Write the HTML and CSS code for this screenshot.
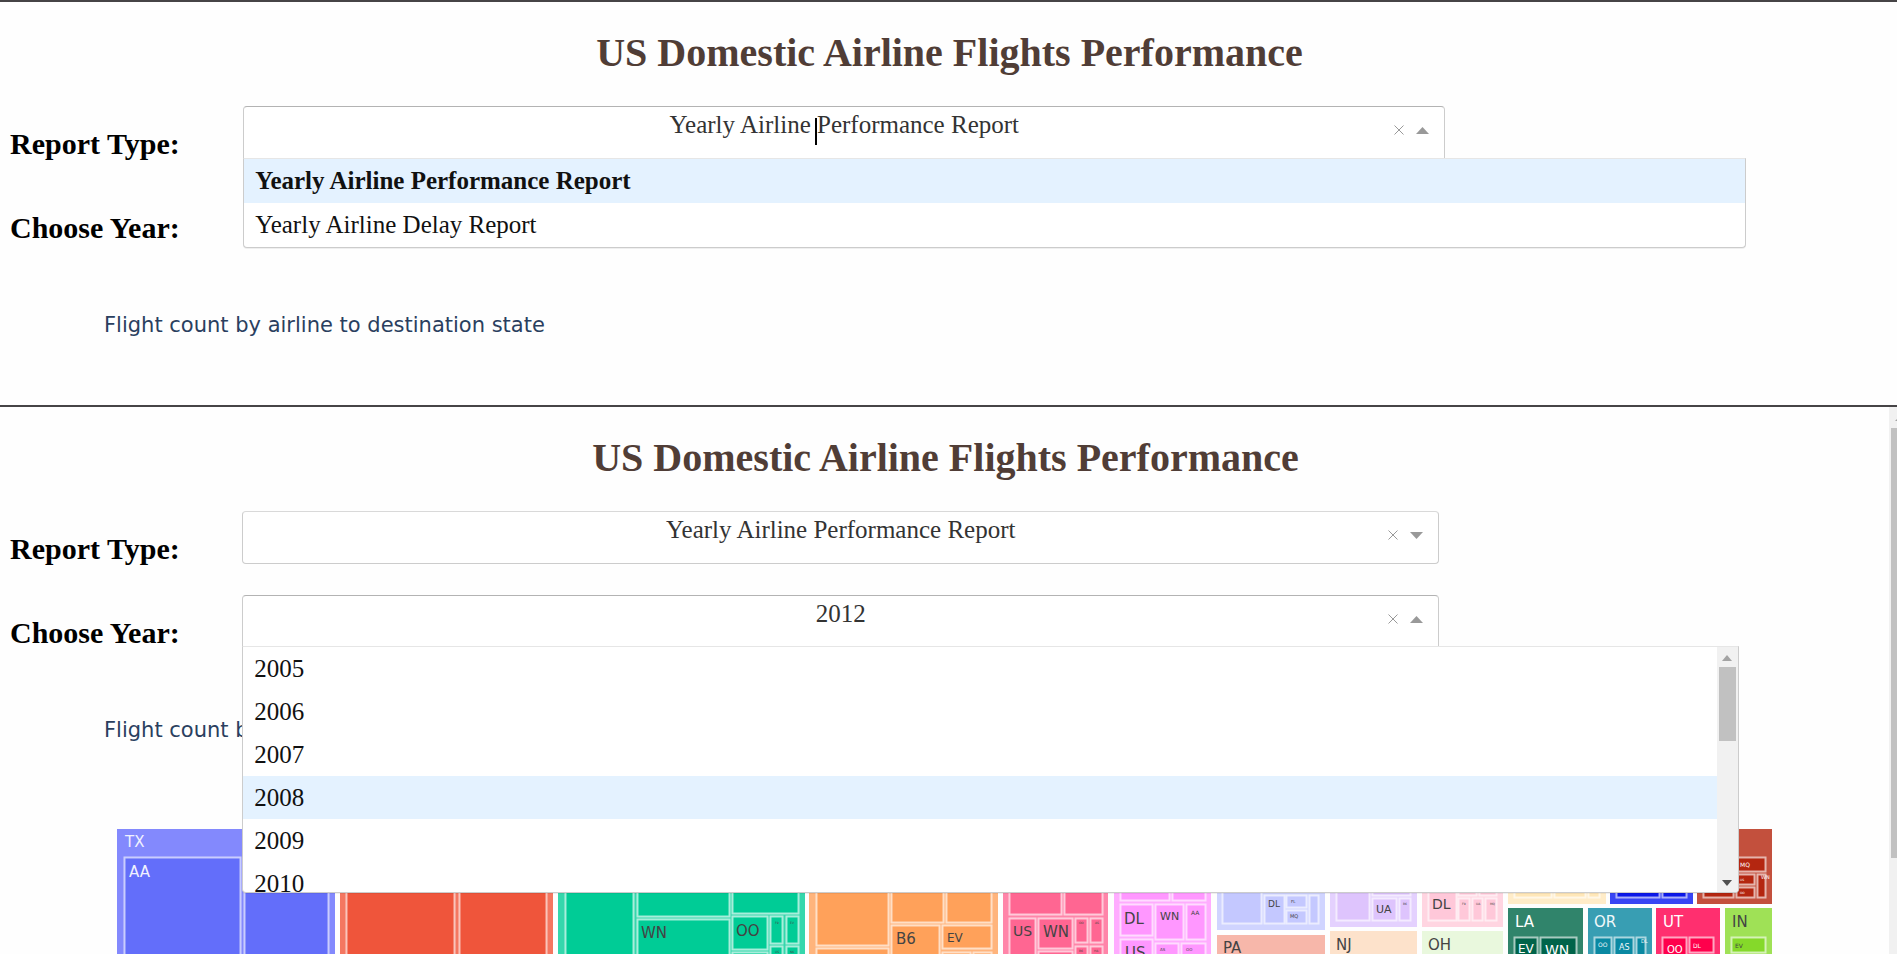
FILE: index.html
```html
<!DOCTYPE html>
<html lang="en">
<head>
<meta charset="utf-8">
<title>US Domestic Airline Flights Performance</title>
<link rel="stylesheet" href="styles.css">
</head>
<body>
<section class="panel">
  <div class="content">
    <h1 class="title">US Domestic Airline Flights Performance</h1>
    <div class="row">
      <label class="label" for="type-a">Report Type:</label>
      <div class="field">
        <div class="control open">
          <select class="select" id="type-a"><option>Yearly Airline Performance Report</option></select>
          <span class="caret"></span>
          <button class="clear" type="button" aria-label="Clear"><svg width="10" height="10" viewBox="0 0 10 10"><path d="M.5.5l9 9M9.500.5l-9 9"/></svg></button>
          <svg class="arrow" width="13" height="7" viewBox="0 0 13 7"><path d="M0 7L6.500 0 13 7z"/></svg>
        </div>
        <div class="menu">
          <div class="options">
            <button class="option active chosen" type="button">Yearly Airline Performance Report</button>
            <button class="option" type="button">Yearly Airline Delay Report</button>
          </div>
        </div>
      </div>
    </div>
    <div class="row">
      <label class="label" for="year-a">Choose Year:</label>
      <div class="field">
        <div class="control">
          <select class="select" id="year-a"><option></option></select>
        </div>
      </div>
    </div>
    <p class="caption">Flight count by airline to destination state</p>
  </div>
</section>
<section class="panel lower">
  <div class="content">
    <h1 class="title">US Domestic Airline Flights Performance</h1>
    <div class="row">
      <label class="label" for="type-b">Report Type:</label>
      <div class="field">
        <div class="control">
          <select class="select" id="type-b"><option>Yearly Airline Performance Report</option></select>
          <button class="clear" type="button" aria-label="Clear"><svg width="10" height="10" viewBox="0 0 10 10"><path d="M.5.5l9 9M9.500.5l-9 9"/></svg></button>
          <svg class="arrow" width="13" height="7" viewBox="0 0 13 7"><path d="M0 0l6.500 7L13 0z"/></svg>
        </div>
      </div>
    </div>
    <div class="row">
      <label class="label" for="year-b">Choose Year:</label>
      <div class="field">
        <div class="control open">
          <select class="select" id="year-b"><option>2012</option></select>
          <button class="clear" type="button" aria-label="Clear"><svg width="10" height="10" viewBox="0 0 10 10"><path d="M.5.5l9 9M9.500.5l-9 9"/></svg></button>
          <svg class="arrow" width="13" height="7" viewBox="0 0 13 7"><path d="M0 7L6.500 0 13 7z"/></svg>
        </div>
        <div class="menu years">
          <div class="options">
            <button class="option" type="button">2005</button>
            <button class="option" type="button">2006</button>
            <button class="option" type="button">2007</button>
            <button class="option active" type="button">2008</button>
            <button class="option" type="button">2009</button>
            <button class="option" type="button">2010</button>
          </div>
          <div class="scrollbar">
            <svg width="10" height="6" viewBox="0 0 10 6"><path fill="#a3a3a3" d="M0 6l5-6 5 6z"/></svg>
            <div class="thumb"></div>
            <svg width="10" height="6" viewBox="0 0 10 6"><path fill="#505050" d="M0 0l5 6 5-6z"/></svg>
          </div>
        </div>
      </div>
    </div>
    <p class="caption">Flight count by airline to destination state</p>
    <div class="chart"><svg id="treemap" viewBox="117 829 1655 127" role="img" aria-label="Treemap of flight counts"></svg></div>
  </div>
  <div class="page-scroll">
    <svg width="2" height="2" viewBox="0 0 2 2"><path fill="#a3a3a3" d="M0 2l2-2v2z"/></svg>
    <div class="page-thumb"></div>
  </div>
</section>
<script src="treemap.js"></script>
</body>
</html>
```
FILE: styles.css
```css
* { box-sizing: border-box; }
body {
  margin: 0;
  height: 100vh;
  display: flex;
  flex-direction: column;
  overflow: hidden;
  background: #fefefe;
  color: #000;
  font-family: "Liberation Serif", "Times New Roman", serif;
}
.panel {
  display: flex;
  border-top: 2px solid #464446;
}
.content {
  flex: 1;
  min-width: 0;
  padding: 28px 8px 67px;
}
.lower {
  flex: 1;
  min-height: 0;
  overflow: hidden;
}
.lower .content { padding-bottom: 0; }
.title {
  margin: 0 0 30px;
  padding-left: 2px;
  text-align: center;
  font-size: 40px;
  line-height: 46px;
  color: #503d36;
}
.row {
  display: grid;
  grid-template-columns: 12.5% 79.9%;
  align-items: start;
  margin-bottom: 29px;
}
.label {
  padding: 21px 0 0 2px;
  font-size: 30px;
  line-height: 34px;
  font-weight: bold;
}
.field { position: relative; }
.control {
  position: relative;
  width: 80%;
  height: 53px;
}
.select {
  appearance: none;
  display: block;
  width: 100%;
  height: 100%;
  margin: 0;
  padding: 0 0 16px;
  border: 1px solid #ccc;
  border-color: #d9d9d9 #ccc #ccc;
  border-radius: 4px;
  background: #fff;
  color: #333;
  font-family: inherit;
  font-size: 25px;
  text-align: center;
  text-align-last: center;
}
.open .select {
  border-color: #b3b3b3 #ccc #e6e6e6;
  border-radius: 4px 4px 0 0;
}
.caret {
  position: absolute;
  left: calc(50% - 29px);
  top: 12px;
  width: 2px;
  height: 27px;
  background: #000;
}
.clear {
  position: absolute;
  right: 41px;
  top: 19px;
  display: flex;
  padding: 0;
  border: 0;
  background: none;
}
.clear path {
  fill: none;
  stroke: #999;
  stroke-width: 1;
}
.arrow {
  position: absolute;
  right: 16px;
  top: 21px;
  fill: #999;
}
.menu {
  position: absolute;
  z-index: 2;
  top: 52px;
  left: 0;
  right: 0;
  display: flex;
  overflow: hidden;
  border: 1px solid #ccc;
  border-top-color: #e6e6e6;
  border-radius: 0 0 4px 4px;
  background: #fff;
  box-shadow: 0 1px 0 rgba(0, 0, 0, 0.06);
}
.years {
  top: 51px;
  height: 247px;
}
.options {
  flex: 1;
  display: flex;
  flex-direction: column;
}
.option {
  flex: none;
  height: 44px;
  padding: 0 11px;
  border: 0;
  background: none;
  color: #111;
  font-family: inherit;
  font-size: 25px;
  text-align: left;
}
.years .option { height: 43px; }
.active { background: #e4f2ff; }
.option.active { background: #e4f2ff; }
.chosen { font-weight: bold; }
.scrollbar {
  display: flex;
  flex-direction: column;
  align-items: center;
  width: 21px;
  padding: 8px 0 6px;
  background: #f1f1f1;
}
.thumb {
  width: 17px;
  height: 74px;
  margin: 6px 0 auto;
  background: #c1c1c1;
}
.caption {
  margin: 67px 0 0;
  padding-left: 96px;
  font-family: "DejaVu Sans", Verdana, sans-serif;
  font-size: 21px;
  line-height: 26px;
  color: #2a3f5f;
}
.chart { padding: 86px 109px 0; }
.chart svg {
  display: block;
  width: 100%;
  font-family: "DejaVu Sans", Verdana, sans-serif;
}
.tile {
  stroke: #fff;
  stroke-opacity: 0.62;
  stroke-width: 2;
}
.page-scroll {
  display: flex;
  flex-direction: column;
  align-items: flex-end;
  width: 8px;
  padding-top: 12px;
  background: #f1f1f1;
}
.page-thumb {
  width: 6px;
  height: 430px;
  margin-top: 7px;
  background: #c1c1c1;
}
```
FILE: treemap.js
```js
// Each state: outer box [x1, y1, x2, y2], header colour, tile colour, text colour,
// labels [text, x, baseline, size] and tiles [x1, y1, x2, y2].
const B = 960;
const states = [
  { box: [117, 829, 335, B], c: "#8389fd", t: "#636efa", f: "#f0f1ff",
    labels: [["TX", 125, 847, 15], ["AA", 129, 877, 15]],
    tiles: [[124, 857, 241, B], [244, 857, 329, B]] },
  { box: [340, 829, 553, B], c: "#f47761", t: "#ef553b", f: "#fff", labels: [],
    tiles: [[346, 857, 455, B], [459, 857, 547, B]] },
  { box: [558, 829, 805, B], c: "#35d7ac", t: "#00cc96", f: "#444",
    labels: [["WN", 641, 938, 15], ["OO", 736, 936, 15], ["F9", 775, 924, 3], ["EV", 790, 924, 3], ["US", 775, 953, 3], ["NK", 790, 953, 3]],
    tiles: [[565, 857, 634, B], [637, 857, 730, 917], [637, 919, 730, B], [732, 857, 799, 914], [732, 916, 768, 950], [732, 952, 768, B],
      [770, 916, 783, 944], [786, 916, 799, 944], [770, 946, 783, B], [786, 946, 799, B]] },
  { box: [809, 829, 998, B], c: "#ffb47c", t: "#ffa15a", f: "#444",
    labels: [["B6", 896, 944, 15], ["EV", 947, 942, 12]],
    tiles: [[816, 857, 889, 946], [816, 948, 889, B], [891, 857, 944, 923], [946, 857, 992, 923], [891, 925, 940, B],
      [942, 925, 992, 949], [942, 952, 971, B], [973, 952, 992, B]] },
  { box: [1003, 829, 1108, B], c: "#ff85a9", t: "#ff6692", f: "#444",
    labels: [["US", 1013, 936, 14], ["WN", 1043, 937, 15], ["OO", 1079, 924, 3], ["AS", 1095, 924, 3], ["B6", 1079, 952, 3], ["HA", 1094, 952, 3]],
    tiles: [[1009, 857, 1062, 915], [1064, 857, 1103, 915], [1009, 918, 1036, B], [1038, 918, 1073, 949], [1038, 951, 1073, B],
      [1075, 918, 1088, 943], [1090, 918, 1103, 943], [1075, 946, 1088, B], [1090, 946, 1103, B]] },
  { box: [1114, 829, 1211, B], c: "#ffacff", t: "#ff97ff", f: "#444",
    labels: [["DL", 1124, 924, 15], ["WN", 1160, 920, 11], ["AA", 1191, 915, 6], ["US", 1125, 958, 15], ["AS", 1160, 951, 4], ["OO", 1186, 951, 4]],
    tiles: [[1120, 857, 1170, 901], [1172, 857, 1206, 901], [1120, 904, 1153, 936], [1120, 939, 1153, B], [1155, 904, 1184, 940],
      [1186, 904, 1206, 940], [1155, 943, 1179, B], [1181, 943, 1206, B]] },
  { box: [1217, 829, 1325, 930], c: "#d0d4ff", t: "#c4c8ff", f: "#444",
    labels: [["DL", 1268, 907, 9], ["FL", 1291, 903, 4], ["MQ", 1290, 918, 5]],
    tiles: [[1222, 857, 1262, 924], [1264, 895, 1285, 924], [1286, 895, 1307, 908], [1286, 910, 1307, 924], [1309, 895, 1319, 924]] },
  { box: [1217, 935, 1325, B], c: "#f7b7aa", f: "#444", labels: [["PA", 1223, 953, 15]], tiles: [] },
  { box: [1330, 829, 1417, 927], c: "#e4d1fe", t: "#dec4fd", f: "#444",
    labels: [["UA", 1376, 913, 11], ["B6", 1403, 905, 3]],
    tiles: [[1336, 857, 1370, 921], [1372, 857, 1411, 896], [1372, 898, 1397, 921], [1399, 898, 1411, 921]] },
  { box: [1330, 931, 1417, B], c: "#fde2cb", f: "#444", labels: [["NJ", 1336, 950, 15]], tiles: [] },
  { box: [1422, 829, 1503, 927], c: "#ffd5e1", t: "#ffc8d9", f: "#444",
    labels: [["DL", 1432, 909, 14], ["F9", 1462, 905, 3], ["UA", 1476, 905, 3], ["MQ", 1490, 905, 3]],
    tiles: [[1428, 857, 1457, 921], [1458, 857, 1477, 896], [1479, 857, 1497, 896], [1458, 898, 1470, 921], [1472, 898, 1483, 921], [1485, 898, 1497, 921]] },
  { box: [1422, 931, 1503, B], c: "#e9f8dd", f: "#444", labels: [["OH", 1428, 950, 15]], tiles: [] },
  { box: [1508, 829, 1606, 904], c: "#ffecc8", t: "#ffe7b8", f: "#444", labels: [],
    tiles: [[1514, 857, 1552, 898], [1554, 857, 1586, 898], [1588, 857, 1600, 898]] },
  { box: [1610, 829, 1693, 904], c: "#3845f4", t: "#0b18e9", f: "#fff", labels: [],
    tiles: [[1616, 857, 1660, 898], [1662, 857, 1687, 898]] },
  { box: [1697, 829, 1772, 904], c: "#c3503d", t: "#b42610", f: "#fff",
    labels: [["MQ", 1740, 867, 6], ["US", 1740, 881, 3], ["OO", 1740, 894, 3], ["WN", 1761, 879, 5]],
    tiles: [[1703, 857, 1734, 898], [1720, 857, 1766, 872], [1736, 874, 1755, 885], [1736, 887, 1755, 898], [1757, 874, 1766, 898]] },
  { box: [1508, 908, 1583, B], c: "#30846b", t: "#00644a", f: "#fff",
    labels: [["LA", 1515, 927, 15], ["EV", 1518, 953, 12], ["WN", 1545, 955, 14]],
    tiles: [[1514, 937, 1538, B], [1540, 937, 1577, B]] },
  { box: [1588, 908, 1652, B], c: "#389eb3", t: "#0a89a2", f: "#f0f8fa",
    labels: [["OR", 1594, 927, 15], ["OO", 1598, 947, 6], ["AS", 1619, 950, 8], ["DL", 1641, 943, 5]],
    tiles: [[1594, 937, 1612, B], [1614, 937, 1634, B], [1636, 937, 1646, B]] },
  { box: [1656, 908, 1720, B], c: "#ff2f6f", t: "#ff004c", f: "#fff",
    labels: [["UT", 1663, 927, 15], ["OO", 1667, 953, 10], ["DL", 1693, 948, 6]],
    tiles: [[1662, 937, 1687, B], [1689, 937, 1714, 953]] },
  { box: [1725, 908, 1772, B], c: "#9fe156", t: "#85d92a", f: "#444",
    labels: [["IN", 1732, 927, 15], ["EV", 1735, 948, 6]],
    tiles: [[1731, 937, 1766, 953]] }
];

const svg = document.getElementById("treemap");
function add(name, attrs, text) {
  const el = document.createElementNS("http://www.w3.org/2000/svg", name);
  for (const key in attrs) el.setAttribute(key, attrs[key]);
  if (text) el.textContent = text;
  svg.appendChild(el);
}
for (const s of states) {
  const [x1, y1, x2, y2] = s.box;
  add("rect", { x: x1, y: y1, width: x2 - x1, height: y2 - y1, fill: s.c });
  for (const [a, b, c, d] of s.tiles) {
    add("rect", { class: "tile", x: a + 0.5, y: b + 0.5, width: c - a - 1, height: d - b - 1, fill: s.t });
  }
  for (const [text, x, y, size] of s.labels) {
    add("text", { x, y, "font-size": size, fill: s.f }, text);
  }
}
```
